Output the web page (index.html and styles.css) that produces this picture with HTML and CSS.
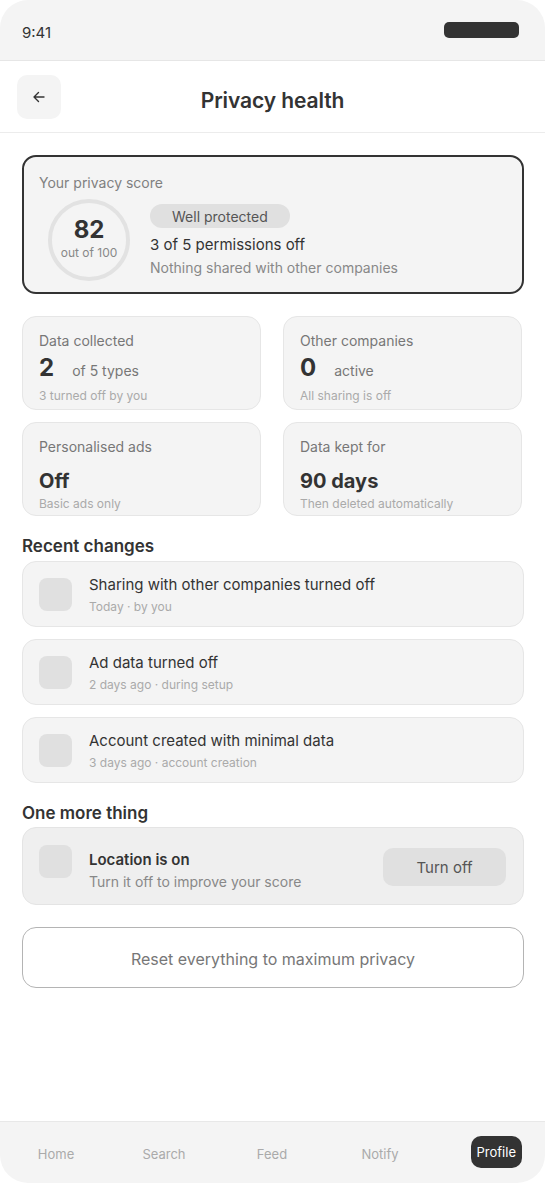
FILE: index.html
```html
<!DOCTYPE html>
<html lang="en">
<head>
<meta charset="utf-8">
<title>Privacy health</title>
<link rel="stylesheet" href="styles.css">
</head>
<body>
<div class="app">
  <div class="status">
    <span class="time">9:41</span>
    <span class="notch"></span>
  </div>
  <header class="topbar">
    <button class="back" aria-label="Back">
      <svg width="16" height="16" viewBox="0 0 16 16" fill="none" stroke="#333" stroke-width="1.4" stroke-linecap="round" stroke-linejoin="round"><path d="M13 8H3M7.5 3.5L3 8l4.5 4.5"/></svg>
    </button>
    <h1 class="title">Privacy health</h1>
    <span class="topbar-spacer"></span>
  </header>
  <main class="content">
    <section class="score-card">
      <div class="score-label">Your privacy score</div>
      <div class="score-row">
        <div class="ring">
          <span class="ring-num">82</span>
          <span class="ring-sub">out of 100</span>
        </div>
        <div class="score-info">
          <span class="badge">Well protected</span>
          <span class="score-main">3 of 5 permissions off</span>
          <span class="score-sub">Nothing shared with other companies</span>
        </div>
      </div>
    </section>

    <section class="stats">
      <div class="stat">
        <div class="stat-label">Data collected</div>
        <div class="stat-value"><span class="num">2</span><span class="unit">of 5 types</span></div>
        <div class="stat-sub">3 turned off by you</div>
      </div>
      <div class="stat">
        <div class="stat-label">Other companies</div>
        <div class="stat-value"><span class="num">0</span><span class="unit">active</span></div>
        <div class="stat-sub">All sharing is off</div>
      </div>
      <div class="stat stat--plain">
        <div class="stat-label">Personalised ads</div>
        <div class="stat-value">Off</div>
        <div class="stat-sub">Basic ads only</div>
      </div>
      <div class="stat stat--plain">
        <div class="stat-label">Data kept for</div>
        <div class="stat-value">90 days</div>
        <div class="stat-sub">Then deleted automatically</div>
      </div>
    </section>

    <h2 class="section-title">Recent changes</h2>
    <div class="list">
      <div class="item">
        <span class="icon"></span>
        <div class="item-text">
          <div class="item-title">Sharing with other companies turned off</div>
          <div class="item-sub">Today · by you</div>
        </div>
      </div>
      <div class="item">
        <span class="icon"></span>
        <div class="item-text">
          <div class="item-title">Ad data turned off</div>
          <div class="item-sub">2 days ago · during setup</div>
        </div>
      </div>
      <div class="item">
        <span class="icon"></span>
        <div class="item-text">
          <div class="item-title">Account created with minimal data</div>
          <div class="item-sub">3 days ago · account creation</div>
        </div>
      </div>
    </div>

    <h2 class="section-title section-title--second">One more thing</h2>
    <div class="alert">
      <span class="icon"></span>
      <div class="alert-text">
        <div class="alert-title">Location is on</div>
        <div class="alert-sub">Turn it off to improve your score</div>
      </div>
      <button class="alert-btn">Turn off</button>
    </div>

    <button class="reset">Reset everything to maximum privacy</button>
  </main>
  <nav class="nav">
    <span class="nav-item">Home</span>
    <span class="nav-item">Search</span>
    <span class="nav-item">Feed</span>
    <span class="nav-item">Notify</span>
    <span class="nav-item nav-item--active">Profile</span>
  </nav>
</div>
</body>
</html>
```
FILE: styles.css
```css
* { box-sizing: border-box; }
html, body { margin: 0; padding: 0; background: #ffffff; }
body {
  font-family: Inter, "Noto Sans", "DejaVu Sans", sans-serif;
  color: #333;
}
button { font-family: inherit; cursor: pointer; }

.app {
  width: 545px;
  height: 1183px;
  border-radius: 28px;
  overflow: hidden;
  background: #fff;
  display: flex;
  flex-direction: column;
}

.status {
  height: 61px;
  flex: none;
  background: #f4f4f4;
  border-bottom: 1px solid #e6e6e6;
  display: flex;
  align-items: center;
  justify-content: space-between;
  padding: 0 26px 0 22px;
}
.time { font-size: 15px; color: #333; margin-top: 4px; }
.notch {
  width: 75px;
  height: 16px;
  border-radius: 5px;
  background: #333;
  margin-top: -1px;
}

.topbar {
  height: 72px;
  flex: none;
  border-bottom: 1px solid #ececec;
  display: flex;
  align-items: center;
  padding: 0 17px;
}
.back {
  width: 44px;
  height: 44px;
  border: none;
  border-radius: 10px;
  background: #f4f4f4;
  display: flex;
  align-items: center;
  justify-content: center;
  padding: 0;
}
.title {
  flex: 1;
  text-align: center;
  margin: 8px 0 0;
  font-size: 21px;
  font-weight: 600;
  color: #333;
  letter-spacing: -0.1px;
}
.topbar-spacer { width: 44px; }

.content {
  flex: 1;
  padding: 22px 21px 0 22px;
  display: flex;
  flex-direction: column;
}

.score-card {
  border: 2px solid #333;
  border-radius: 14px;
  background: #f4f4f4;
  padding: 16px 15px 10px;
  height: 139px;
}
.score-label { font-size: 14px; line-height: 20px; color: #808080; }
.score-row {
  display: flex;
  align-items: center;
  margin-top: 6px;
}
.ring {
  width: 82px;
  height: 82px;
  border-radius: 50%;
  border: 4px solid #e2e2e2;
  margin-left: 9px;
  display: flex;
  flex-direction: column;
  align-items: center;
  justify-content: center;
}
.ring-num { font-size: 24px; font-weight: 700; line-height: 28px; color: #333; margin-top: -4px; }
.ring-sub { font-size: 12px; line-height: 16px; color: #888; margin-top: 1px; }
.score-info {
  display: flex;
  flex-direction: column;
  align-items: flex-start;
  margin-left: 20px;
  margin-top: 2px;
}
.badge {
  background: #e0e0e0;
  border-radius: 12px;
  height: 24px;
  line-height: 25px;
  padding: 0 22px;
  font-size: 14px;
  color: #555;
}
.score-main { font-size: 15px; line-height: 20px; color: #333; margin-top: 7px; }
.score-sub { font-size: 14px; line-height: 20px; color: #888; margin-top: 3px; }

.stats {
  display: grid;
  grid-template-columns: 239px 239px;
  column-gap: 22px;
  row-gap: 12px;
  margin-top: 22px;
}
.stat {
  border: 1px solid #e6e6e6;
  border-radius: 14px;
  background: #f4f4f4;
  padding: 14px 16px 5px;
  height: 94px;
}
.stat-label { font-size: 14px; line-height: 20px; color: #777; }
.stat-value {
  display: flex;
  align-items: baseline;
  margin-top: 2px;
  height: 30px;
}
.num { font-size: 24px; font-weight: 700; line-height: 30px; color: #333; }
.unit { font-size: 14px; color: #777; margin-left: 18px; }
.stat-sub { font-size: 12px; line-height: 16px; color: #aaa; margin-top: 5px; }
.stat--plain .stat-value {
  display: block;
  font-size: 20px;
  font-weight: 700;
  line-height: 28px;
  height: 28px;
  margin-top: 10px;
  color: #333;
}
.stat--plain .stat-sub { margin-top: 1px; }

.section-title {
  margin: 18px 0 3px;
  font-size: 17px;
  line-height: 24px;
  font-weight: 600;
  color: #333;
}
.section-title--second { margin-top: 18px; margin-bottom: 2px; }

.list { display: flex; flex-direction: column; gap: 12px; }
.item {
  height: 66px;
  border: 1px solid #e6e6e6;
  border-radius: 14px;
  background: #f4f4f4;
  display: flex;
  align-items: center;
  padding: 0 16px;
}
.icon {
  width: 33px;
  height: 33px;
  border-radius: 8px;
  background: #e0e0e0;
  flex: none;
}
.item-text { margin-left: 17px; margin-top: 2px; }
.item-title { font-size: 15px; line-height: 20px; color: #333; }
.item-sub { font-size: 12px; line-height: 16px; color: #aaa; margin-top: 4px; }

.alert {
  height: 78px;
  border: 1px solid #e4e4e4;
  border-radius: 14px;
  background: #efefef;
  display: flex;
  align-items: flex-start;
  padding: 17px 17px 0 16px;
}
.alert-text { margin-left: 17px; margin-top: 5px; flex: 1; }
.alert-title { font-size: 15px; line-height: 20px; font-weight: 600; color: #333; }
.alert-sub { font-size: 14px; line-height: 20px; color: #888; margin-top: 2px; }
.alert-btn {
  align-self: center;
  margin-top: -16px;
  width: 123px;
  height: 38px;
  border: none;
  border-radius: 10px;
  background: #e0e0e0;
  font-size: 15px;
  color: #555;
  padding-top: 2px;
}

.reset {
  margin-top: 22px;
  height: 61px;
  border: 1.5px solid #b4b4b4;
  border-radius: 14px;
  background: #fff;
  font-size: 16px;
  color: #777;
  padding-top: 3px;
}

.nav {
  height: 62px;
  flex: none;
  background: #f4f4f4;
  border-top: 1px solid #e8e8e8;
  display: grid;
  grid-template-columns: repeat(4, 108px) 1fr;
  align-items: center;
  padding: 0 23px 0 2px;
}
.nav-item {
  font-size: 13px;
  color: #aaa;
  line-height: 16px;
  text-align: center;
  margin-top: 3px;
}
.nav-item--active {
  justify-self: end;
  background: #333;
  color: #fff;
  border-radius: 10px;
  padding: 8px 6px;
  margin-top: -2px;
}
```
